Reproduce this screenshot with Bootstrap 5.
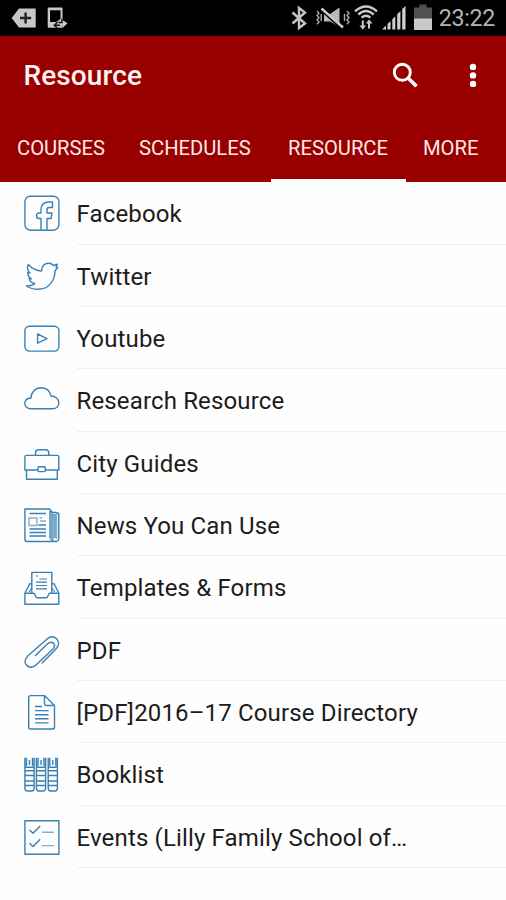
<!DOCTYPE html>
<html lang="en">
<head>
<meta charset="utf-8">
<meta name="viewport" content="width=device-width, initial-scale=1">
<title>Resource</title>
<link href="https://cdn.jsdelivr.net/npm/bootstrap@5.3.0/dist/css/bootstrap.min.css" rel="stylesheet">
<style>
body{font-family:Roboto,sans-serif;background:#fefefe;color:#1c1c1c;overflow:hidden}
svg{display:block;flex:none}
.status-bar{height:36px;background:#000;padding:0 11px}
.status-bar svg{height:36px}
.clock{font-size:23.2px;line-height:36px;color:#b4b4b4;margin-left:7px;letter-spacing:-.3px}
.app-head{background:#980000;height:145.5px}
.title-bar{height:80px;padding:0 28px 0 23.5px}
.title-bar h1{font-size:28px;font-weight:500;line-height:36px;color:#fff3f2;letter-spacing:.1px}
.search-glyph{margin-right:1px}
.tab-strip{height:65.5px}
.tab-strip .nav-link{color:#ffe9e6;font-size:20.2px;line-height:24px;padding:20px 0 0 17px;border-bottom:3px solid transparent;border-radius:0;white-space:nowrap}
.tab-strip .nav-link.active{border-color:#fff}
.w-a{width:122px}.w-b{width:149px}.w-c{width:135px}.w-d{width:100px}
.res-item{padding-left:24px;height:62.35px}
.res-item svg{width:36px;height:36px;fill:none;stroke:#3a80b2;stroke-width:1.4;stroke-linejoin:round}
.res-item .soft{stroke:#86aecd}
.res-list{padding-top:.7px}
.res-name{margin-left:16.5px;height:62.35px;line-height:64.5px;font-size:24px;letter-spacing:.15px;border-bottom:1.5px solid #efefef}
</style>
</head>
<body>
<header>
<div class="status-bar d-flex align-items-center">
  <svg width="26" viewBox="0 0 26 36"><path d="M.7 18L8 8.5H24.7V27.5H8Z" fill="#c8c8c8"/><path d="M14.6 12.5V23.5M9 18H20.2" stroke="#222" stroke-width="2.4"/></svg>
  <svg class="ms-2" width="24" viewBox="0 0 24 36"><path fill="#c8c8c8" fill-rule="evenodd" d="M3.5 7.5H16.5Q17.5 7.5 17.5 8.5V27.7H3.5Q2.7 27.7 2.7 26.7V8.5Q2.7 7.5 3.5 7.5ZM5 10.2V22H15.5V10.2Z"/><path d="M11 22.3L17.5 17.5V20L22.5 23.2L17.5 28V25.4Z" fill="#c8c8c8"/><path d="M9 25.2h6m-2.5-3l-3.2 3 3.2 3M17 18.5v4h-3.5" fill="none" stroke="#111" stroke-width="1.4"/></svg>
  <div class="d-flex align-items-center ms-auto">
  <svg width="17" viewBox="0 0 17 36"><path d="M1.5 12.5L14 23.5L8 28V8L14 12.5L1.5 23.5" fill="none" stroke="#c4c4c4" stroke-width="2.4"/></svg>
  <svg class="ms-2" width="34" viewBox="0 0 34 36"><path fill="#b9b9b9" d="M8 14h6L23.5 7.5V27L14 21.5H8Z"/><path d="M6 10.5L25 28" stroke="#000" stroke-width="2.4"/><path d="M5.5 8.5L27 27.5" stroke="#c8c8c8" stroke-width="2.4"/><path d="M1 11l2 2.2-2 2.2 2 2.2-2 2.2 2 2.2-2 2.2M5.2 14v7M31 11l2 2.2-2 2.2 2 2.2-2 2.2 2 2.2-2 2.2M28.5 14v7" fill="none" stroke="#a8a8a8" stroke-width="1.4"/></svg>
  <svg class="ms-1" width="24" viewBox="0 0 24 36"><g fill="none" stroke="#c8c8c8" stroke-width="2.4"><path d="M1 11.3Q12 1.5 23 11.3M4.3 14.5Q12 7.5 19.7 14.5M7.6 17.7Q12 13.6 16.4 17.7"/></g><path d="M8.8 29.5L5.4 25.5H7.8V20.5H9.8V25.5H12.2ZM15 19.5L18.4 23.5H16V28.5H14V23.5H11.8Z" fill="#c8c8c8"/></svg>
  <svg class="ms-1" width="24" viewBox="0 0 24 36"><path fill="#d0d0d0" d="M.5 29.5V29L4 25.6V29.5ZM5.5 29.5V24L8.5 21V29.5ZM10.3 29.5V19.2L13.3 16.2V29.5ZM15.2 29.5V14.3L18.4 11V29.5ZM20.2 29.5V9L23.5 6V29.5Z"/></svg>
  <svg class="ms-2" width="18" viewBox="0 0 18 36"><path fill="#505050" d="M0 7.5H5.3V4.5H12.5V7.5H18V19H0Z"/><path fill="#c8c8c8" d="M0 18.5H18V30H0Z"/></svg>
  <span class="clock">23:22</span>
  </div>
</div>
<div class="app-head">
  <div class="title-bar d-flex align-items-center">
    <h1 class="m-0 me-auto">Resource</h1>
    <svg class="search-glyph" width="28" height="28" viewBox="0 0 28 28" fill="none" stroke="#fff"><circle cx="11.3" cy="10.3" r="8" stroke-width="2.9"/><path d="M16.8 15.8L25.5 24.3" stroke-width="3.7"/></svg>
    <svg class="ms-5" width="10" height="28" viewBox="0 0 10 28" fill="#fff"><circle cx="5" cy="4.9" r="3.2"/><circle cx="5" cy="13.4" r="3.2"/><circle cx="5" cy="21.9" r="3.2"/></svg>
  </div>
  <nav class="nav tab-strip flex-nowrap align-items-stretch">
    <a class="nav-link w-a">COURSES</a><a class="nav-link w-b">SCHEDULES</a><a class="nav-link active w-c">RESOURCE</a><a class="nav-link w-d">MORE</a>
  </nav>
</div>
</header>
<main>
<ul class="res-list list-unstyled m-0">
<li class="res-item d-flex align-items-center"><svg viewBox="0 0 36 36"><rect x=".9" y="1.2" width="34" height="34" rx="5.5"/><path d="M17 35V23.5H15Q12.5 23.5 12.5 20.7T15 18H17V15C17 10 20 7 25 7H28.5V12.5H25C23.5 12.5 23 13.5 23 15V18H28L27 23.5H23V35"/></svg><span class="res-name flex-grow-1">Facebook</span></li>
<li class="res-item d-flex align-items-center"><svg viewBox="0 0 36 36"><path d="M4.2 6.5C8 10.5 12 12.8 17.5 13C17.5 8 20.5 5.3 24.5 5.3C26.7 5.3 28.2 6 29.5 7.5L33.3 6.2L32 9.3L33.8 9.5L31 12.8C31 23 24.5 31.3 14 31.3C9.5 31.3 5.5 30 2.5 28C6 28 8.5 27.5 10.8 25.5C8 25 6 23.5 5.2 21L7.5 20.8C5 19.5 3.8 17.5 3.7 14.5L5.8 15C3.5 12.5 3 9.5 4.2 6.5Z"/></svg><span class="res-name flex-grow-1">Twitter</span></li>
<li class="res-item d-flex align-items-center"><svg viewBox="0 0 36 36"><rect x=".9" y="6.3" width="34" height="24.8" rx="4.5"/><path d="M13.6 14L23 18.6L13.6 23.2Z"/></svg><span class="res-name flex-grow-1">Youtube</span></li>
<li class="res-item d-flex align-items-center"><svg viewBox="0 0 36 36"><path d="M7 26.8C3.3 26.8.8 24.5.8 21.5C.8 18.5 3 16.3 7 16C7 10 11.5 5.8 17 5.8C22.5 5.8 26 9 26.8 14C31.5 14 34.8 17 34.8 20.7C34.8 24.5 32 26.8 28.5 26.8Z"/></svg><span class="res-name flex-grow-1">Research Resource</span></li>
<li class="res-item d-flex align-items-center"><svg viewBox="0 0 36 36"><path d="M14 25H.9V12Q.9 10.4 2.5 10.4H33.3Q34.8 10.4 34.8 12V25H21.5M2.5 25V34.2H33.3V25M11.5 10V8Q11.5 4.8 14.5 4.8H21.5Q24.8 4.8 24.8 8V10"/><rect x="14" y="21.8" width="7.3" height="4.8" rx="1"/></svg><span class="res-name flex-grow-1">City Guides</span></li>
<li class="res-item d-flex align-items-center"><svg viewBox="0 0 36 36"><path d="M31 34.5H3.2Q.9 34.5.9 32V2H25.5L28 5V32.5Q28.5 34.5 31 34.5Q34.8 34.5 34.8 31.5V6.5L31.5 5.5H28M31 7V31M26 4V31"/><path class="soft" d="M29.5 7V32M32.5 7V32M26.2 31Q26.5 33 28 34.3"/><path d="M5.5 6.5H22M14.5 18H22M5.5 22H22M5.5 25.5H22M5.5 29H22"/><path class="soft" d="M5 11H13V18.5H5ZM16 14H22M15.5 11H18"/></svg><span class="res-name flex-grow-1">News You Can Use</span></li>
<li class="res-item d-flex align-items-center"><svg viewBox="0 0 36 36"><path d="M7.8 24V3.4H27.8V24M.9 24.2H10.2L12.5 28.8H23L25.3 24.2H34.8V35.2H.9ZM.9 24L5.8 14.8H7.8M34.8 24L30 14.8H27.8"/><path d="M5 23L7.8 19M30.8 23L27.8 19M12 7H14M15.5 10H23M12 13.2H23M12 16.5H23M12 19.8H23" stroke-width="1.2"/></svg><span class="res-name flex-grow-1">Templates &amp; Forms</span></li>
<li class="res-item d-flex align-items-center"><svg viewBox="0 0 36 36"><path stroke-linecap="round" d="M18.2 31L31.5 17.5C36.5 12.3 34.5 7.5 31.5 5.8C28.5 4 25 5 22.2 7.7L4 23.8C-.3 28 .6 31.5 3 33.6C5.7 36 9.3 35.5 12.3 32.7L28.5 17.5C31 15 31 12.8 29.5 11.3C27.8 9.6 25.5 10 23.3 12L11.5 23.5"/></svg><span class="res-name flex-grow-1">PDF</span></li>
<li class="res-item d-flex align-items-center"><svg viewBox="0 0 36 36"><path d="M20.5 1.6H6.5Q4.7 1.6 4.7 3.4V33.2Q4.7 35 6.5 35H28.7Q30.5 35 30.5 33.2V11.5L20.5 1.6V9.8Q20.5 11.5 22.2 11.5H30.5M11 12.5H18M11 16.6H24.5M11 20.7H24.5M11 24.8H24.5M11 28.9H24.5"/></svg><span class="res-name flex-grow-1">[PDF]2016–17 Course Directory</span></li>
<li class="res-item d-flex align-items-center"><svg viewBox="0 0 36 36"><path id="book" d="M.9 1.8V32Q.9 35 3.5 35H7.5Q10.1 35 10.1 32V1.8M.9 11.2H10.1M.9 14.8H10.1M.9 19.5H10.1M.9 25H10.1M.9 29.5H10.1M2.5 10V1.8M8.5 10V1.8M5.5 4V9"/><use href="#book" x="11.5"/><use href="#book" x="23.3"/></svg><span class="res-name flex-grow-1">Booklist</span></li>
<li class="res-item d-flex align-items-center"><svg viewBox="0 0 36 36"><rect x=".9" y="1.8" width="34" height="33.5"/><path d="M5.5 11L9 14.3L16.2 7M5.5 24.3L9 27.6L16.2 20.3"/><path class="soft" d="M18 13.3H30M18 26.6H30"/></svg><span class="res-name flex-grow-1">Events (Lilly Family School of…</span></li>
</ul>
</main>
<script src="https://cdn.jsdelivr.net/npm/bootstrap@5.3.0/dist/js/bootstrap.bundle.min.js"></script>
</body>
</html>
